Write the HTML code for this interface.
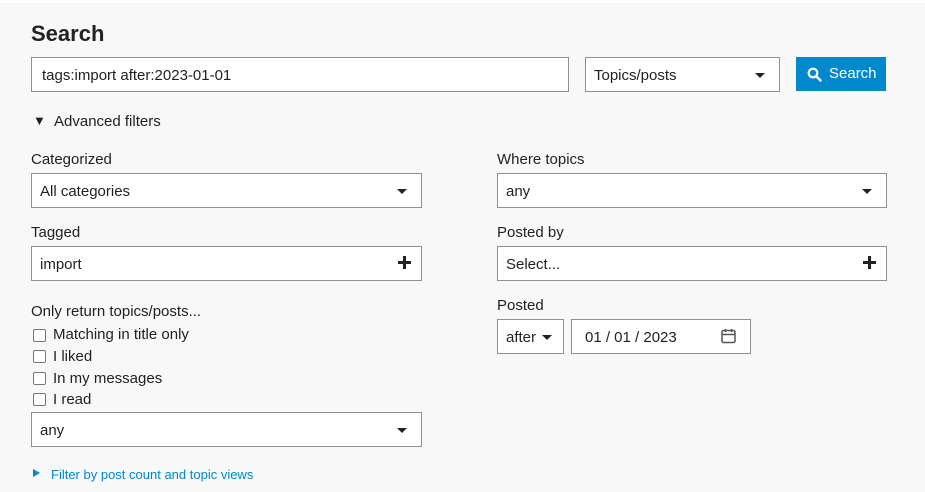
<!DOCTYPE html>
<html><head><style>
*{box-sizing:border-box;margin:0;padding:0}
body{width:925px;height:492px;background:#fff;font-family:"Liberation Sans",sans-serif;color:#222;font-size:15px;position:relative;overflow:hidden}
.panel{position:absolute;left:0;top:3px;width:925px;height:489px;background:#f8f8f8}
.a{position:absolute}
.box{position:absolute;background:#fff;border:1px solid #919191;height:35px;line-height:35px;padding-left:8px;font-size:15px;color:#222}
.caret{position:absolute;right:14px;top:15px;width:0;height:0;border-left:5px solid transparent;border-right:5px solid transparent;border-top:5px solid #222}
.plus{position:absolute;right:10px;top:9px;width:13px;height:13px}
.plus:before{content:"";position:absolute;left:5px;top:0;width:3px;height:13px;background:#222}
.plus:after{content:"";position:absolute;left:0;top:5px;width:13px;height:3px;background:#222}
.lbl{position:absolute;font-size:15px;color:#222}
.cb{position:absolute;left:33px;width:13px;height:13px;border:1px solid #767676;border-radius:2px;background:#fff}
.cbl{position:absolute;left:53px;font-size:15px}
</style></head><body>
<div class="panel"></div>
<div class="a" style="left:31px;top:21px;font-size:22px;font-weight:bold;color:#222">Search</div>
<div class="box" style="left:31px;top:57px;width:538px;padding-left:10px">tags:import after:2023-01-01</div>
<div class="box" style="left:585px;top:57px;width:195px">Topics/posts<div class="caret"></div></div>
<div class="a" style="left:796px;top:57px;width:90px;height:34px;background:#0088cc;color:#fff;line-height:34px;font-size:15px">
<svg style="position:absolute;left:11px;top:10px" width="15" height="15" viewBox="0 0 15 15"><circle cx="6" cy="6" r="4.3" fill="none" stroke="#fff" stroke-width="2.2"/><path d="M9 9L13.5 13.5" stroke="#fff" stroke-width="2.6" stroke-linecap="round"/></svg>
<span style="position:absolute;left:33px;top:0">Search</span></div>
<div class="a" style="left:33px;top:113px;font-size:13px">▼</div>
<div class="a" style="left:54px;top:113px;font-size:15px">Advanced filters</div>

<div class="lbl" style="left:31px;top:151px">Categorized</div>
<div class="box" style="left:31px;top:173px;width:391px">All categories<div class="caret"></div></div>
<div class="lbl" style="left:31px;top:224px">Tagged</div>
<div class="box" style="left:31px;top:246px;width:391px">import<div class="plus"></div></div>
<div class="lbl" style="left:31px;top:303px">Only return topics/posts...</div>
<div class="cb" style="top:329px"></div><div class="cbl" style="top:326px">Matching in title only</div>
<div class="cb" style="top:350px"></div><div class="cbl" style="top:348px">I liked</div>
<div class="cb" style="top:372px"></div><div class="cbl" style="top:370px">In my messages</div>
<div class="cb" style="top:393px"></div><div class="cbl" style="top:391px">I read</div>
<div class="box" style="left:31px;top:412px;width:391px">any<div class="caret"></div></div>
<div class="a" style="left:33px;top:469px;width:0;height:0;border-top:4px solid transparent;border-bottom:4px solid transparent;border-left:7px solid #0088cc"></div>
<div class="a" style="left:51px;top:467px;font-size:13px;color:#0088cc">Filter by post count and topic views</div>

<div class="lbl" style="left:497px;top:151px">Where topics</div>
<div class="box" style="left:497px;top:173px;width:390px">any<div class="caret"></div></div>
<div class="lbl" style="left:497px;top:224px">Posted by</div>
<div class="box" style="left:497px;top:246px;width:390px">Select...<div class="plus"></div></div>
<div class="lbl" style="left:497px;top:297px">Posted</div>
<div class="box" style="left:497px;top:319px;width:67px">after<div class="caret" style="right:11px"></div></div>
<div class="box" style="left:571px;top:319px;width:180px;padding-left:13px">01 / 01 / 2023
<svg style="position:absolute;left:149px;top:8px" width="15" height="16" viewBox="0 0 15 16"><rect x="1" y="2.5" width="13" height="12" rx="1.5" fill="none" stroke="#555" stroke-width="1.5"/><path d="M1 6.5H14M4.5 1V4M10.5 1V4" stroke="#555" stroke-width="1.5"/></svg></div>
</body></html>
